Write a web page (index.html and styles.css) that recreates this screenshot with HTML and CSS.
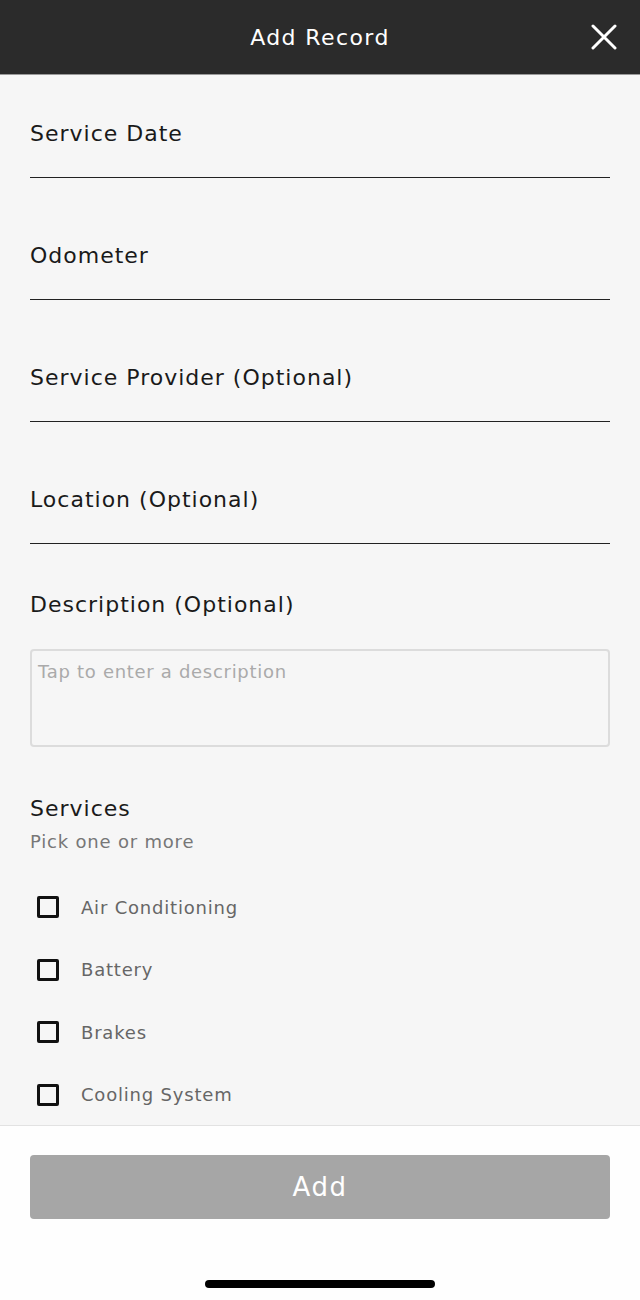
FILE: index.html
```html
<!DOCTYPE html>
<html lang="en">
<head>
    <meta charset="UTF-8">
    <meta name="viewport" content="width=device-width, initial-scale=1.0">
    <title>Add Record</title>
    <link rel="stylesheet" href="styles.css">
</head>
<body>
    <div class="screenClass">
        <div class="headerClass">
            <div class="headerTitleClass">Add Record</div>
            <div class="closeButtonClass">
                <svg width="26" height="26" viewBox="0 0 26 26">
                    <path d="M2 2 L24 24 M24 2 L2 24" stroke="#fff" stroke-width="3" stroke-linecap="round"/>
                </svg>
            </div>
        </div>

        <form class="formClass" name="recordForm">
            <div class="fieldClass firstFieldClass">
                <div class="fieldCaptionClass">Service Date</div>
            </div>
            <div class="fieldClass">
                <div class="fieldCaptionClass">Odometer</div>
            </div>
            <div class="fieldClass">
                <div class="fieldCaptionClass">Service Provider (Optional)</div>
            </div>
            <div class="fieldClass">
                <div class="fieldCaptionClass">Location (Optional)</div>
            </div>

            <div class="descriptionClass">
                <div class="fieldCaptionClass">Description (Optional)</div>
                <div class="descriptionBoxClass">Tap to enter a description</div>
            </div>

            <div class="servicesClass">
                <div class="fieldCaptionClass">Services</div>
                <div class="servicesHintClass">Pick one or more</div>
                <div class="checkListClass">
                    <div class="checkRowClass"><span class="checkBoxClass"></span>Air Conditioning</div>
                    <div class="checkRowClass"><span class="checkBoxClass"></span>Battery</div>
                    <div class="checkRowClass"><span class="checkBoxClass"></span>Brakes</div>
                    <div class="checkRowClass"><span class="checkBoxClass"></span>Cooling System</div>
                </div>
            </div>
        </form>

        <div class="footerClass">
            <div class="addButtonClass">Add</div>
            <div class="homeBarClass"></div>
        </div>
    </div>
</body>
</html>
```

FILE: styles.css
```css
body{
    margin: 0;
    font-family: "DejaVu Sans", sans-serif;
    background: #f6f6f6;
}
.screenClass{
    width: 640px;
    height: 1300px;
    display: flex;
    flex-direction: column;
    overflow: hidden;
}
.headerClass{
    flex-shrink: 0;
    height: 74px;
    background: #2b2b2b;
    border-bottom: 1px solid #9a9a9a;
    display: flex;
    align-items: center;
    justify-content: center;
    position: relative;
}
.headerTitleClass{
    color: #fff;
    font-size: 22px;
    letter-spacing: 1.4px;
}
.closeButtonClass{
    position: absolute;
    right: 23px;
    top: 24px;
    height: 26px;
}
.formClass{
    flex: 1;
    min-height: 0;
    overflow: hidden;
    padding: 0 30px;
}
.fieldClass{
    padding-top: 66px;
    padding-bottom: 31px;
    border-bottom: 1.5px solid #222;
}
.firstFieldClass{
    padding-top: 47px;
}
.fieldCaptionClass{
    font-size: 22px;
    line-height: 24px;
    letter-spacing: 1px;
    color: #1a1a1a;
}
.descriptionClass{
    padding-top: 49px;
}
.descriptionBoxClass{
    margin-top: 32px;
    height: 98px;
    box-sizing: border-box;
    border: 2px solid #dcdcdc;
    border-radius: 4px;
    padding: 10px 6px;
    font-size: 18px;
    line-height: 22px;
    letter-spacing: 0.7px;
    color: #aaa;
}
.servicesClass{
    padding-top: 50px;
}
.servicesHintClass{
    font-size: 18px;
    line-height: 22px;
    letter-spacing: 0.8px;
    color: #777;
    margin-top: 10px;
}
.checkListClass{
    margin-top: 41px;
    display: flex;
    flex-direction: column;
    gap: 36.5px;
}
.checkRowClass{
    display: flex;
    align-items: center;
    height: 26px;
    font-size: 18px;
    letter-spacing: 0.8px;
    color: #666;
}
.checkBoxClass{
    width: 22px;
    height: 22px;
    box-sizing: border-box;
    border: 3px solid #111;
    border-radius: 2px;
    margin-left: 7px;
    margin-right: 22px;
    flex-shrink: 0;
}
.footerClass{
    flex-shrink: 0;
    height: 175px;
    box-sizing: border-box;
    background: #fefefe;
    border-top: 1px solid #e2e2e2;
    padding: 29px 30px 0;
    display: flex;
    flex-direction: column;
    align-items: center;
}
.addButtonClass{
    width: 100%;
    height: 64px;
    flex-shrink: 0;
    background: #a6a6a6;
    border-radius: 4px;
    color: #fff;
    font-size: 26px;
    letter-spacing: 1.5px;
    display: flex;
    align-items: center;
    justify-content: center;
}
.homeBarClass{
    width: 230px;
    height: 8px;
    flex-shrink: 0;
    border-radius: 4px;
    background: #000;
    margin-top: 61px;
}
```
